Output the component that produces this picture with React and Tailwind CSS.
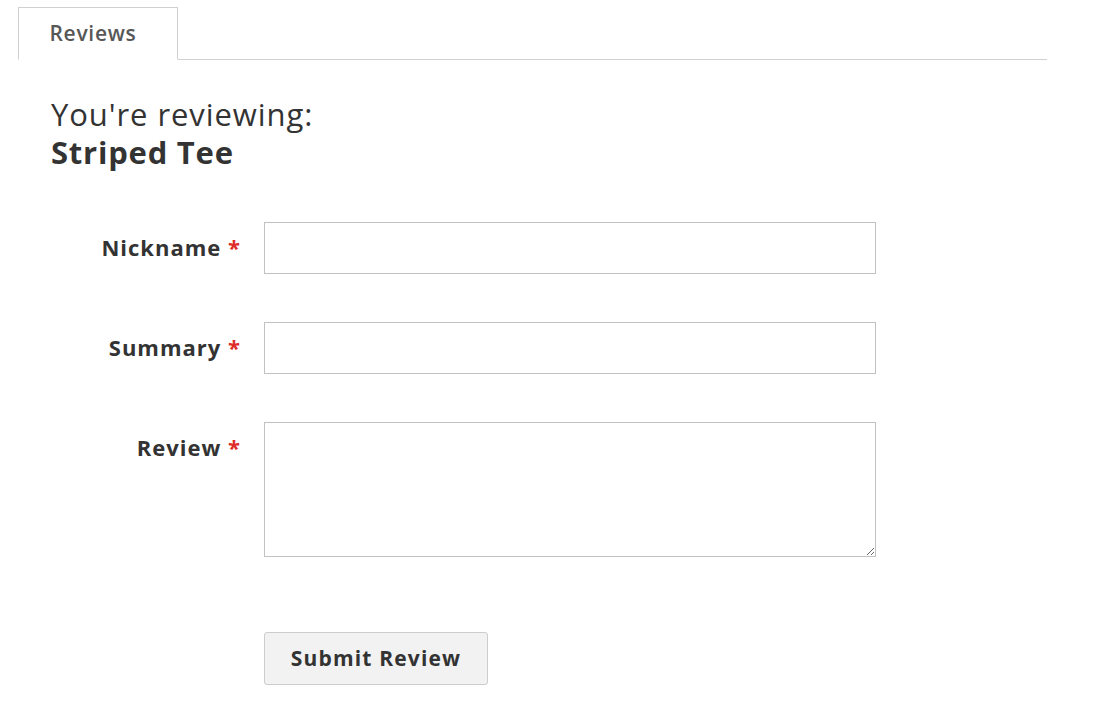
import React from 'react';

const Field = ({ label, multiline }) => (
  <div className="flex items-start">
    <label className="w-[241px] shrink-0 pt-[9px] text-right text-[22px] font-bold tracking-[0.045em] text-[#333]">
      {label} <span className="text-[#e02b27]">*</span>
    </label>
    <div className="ml-[23px]">
      {multiline ? (
        <textarea className="block h-[135px] w-[612px] resize border border-[#c2c2c2] bg-white" />
      ) : (
        <input type="text" className="block h-[52px] w-[612px] border border-[#c2c2c2] bg-white" />
      )}
    </div>
  </div>
);

export default function App() {
  return (
    <div className="min-h-[701px] bg-white pt-[7px] font-['Open_Sans',sans-serif] text-[#333]">
      <div className="ml-[18px] mr-[53px] flex border-b border-[#d1d1d1]">
        <div className="-mb-px flex h-[53px] w-[160px] items-center justify-center border border-b-white border-[#d1d1d1] bg-white pr-[10px] text-[21px] font-semibold tracking-[0.035em] text-[#575757]">
          Reviews
        </div>
      </div>

      <div className="pl-[51px] pt-[36px]">
        <div className="text-[31px] font-normal leading-[36px] tracking-[0.03em] text-[#333]">You're reviewing:</div>
        <div className="text-[31px] font-bold leading-[40px] tracking-[0.025em] text-[#333]">Striped Tee</div>
      </div>

      <div className="mt-[50px] flex flex-col gap-[48px]">
        <Field label="Nickname" />
        <Field label="Summary" />
        <Field label="Review" multiline />
      </div>

      <div className="ml-[264px] mt-[75px]">
        <button className="h-[53px] w-[224px] rounded-[3px] border border-[#cdcdcd] bg-[#f2f2f2] text-[21px] font-bold tracking-[0.055em] text-[#333]">
          Submit Review
        </button>
      </div>
    </div>
  );
}
